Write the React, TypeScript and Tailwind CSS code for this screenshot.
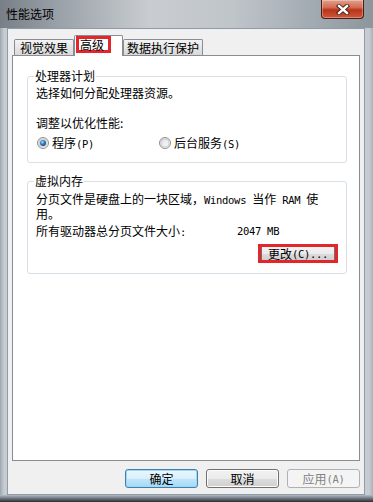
import React from 'react';

function Latin({ children }: { children: React.ReactNode }) {
  return (
    <span className="font-['DejaVu_Sans_Mono',monospace] text-[10.5px] tracking-[-0.3px]">
      {children}
    </span>
  );
}

function Radio({ id, checked }: { id: string; checked?: boolean }) {
  return (
    <svg width="12" height="12" viewBox="0 0 12 12" className="shrink-0">
      <defs>
        <linearGradient id={`${id}-ring`} x1="0" y1="0" x2="1" y2="1">
          <stop offset="0" stopColor="#dcdcdc" />
          <stop offset="1" stopColor="#ffffff" />
        </linearGradient>
        <radialGradient id={`${id}-dot`} cx="0.4" cy="0.35" r="0.7">
          <stop offset="0" stopColor="#b8e0f8" />
          <stop offset="0.45" stopColor="#3a86c8" />
          <stop offset="1" stopColor="#0e3f73" />
        </radialGradient>
      </defs>
      <circle cx="6" cy="6" r="5.5" fill={`url(#${id}-ring)`} stroke="#8e8f8f" />
      <circle cx="6" cy="6" r="4" fill="none" stroke="#c8c8c8" strokeWidth="0.8" />
      {checked && <circle cx="6" cy="6" r="3" fill={`url(#${id}-dot)`} />}
    </svg>
  );
}

function TitleBar() {
  return (
    <div className="h-[28px] flex items-start justify-between pl-[6px] pr-[9px] bg-[linear-gradient(90deg,#787f86_0%,#9aa1a8_16%,#c9cdd1_40%,#c0c5ca_62%,#a5adb4_82%,#8d959d_100%)]">
      <span className="mt-[7px] leading-[14px] text-[12px] text-black">性能选项</span>
      <button className="flex items-center justify-center w-[43px] h-[19px] rounded-b-[4px] border border-t-0 border-[#4a1d14] bg-[linear-gradient(180deg,#e2a08d_0%,#d26a50_42%,#b9341b_55%,#cf563a_100%)] shadow-[inset_0_0_0_1px_rgba(255,255,255,0.3)]">
        <svg width="14" height="11" viewBox="0 0 14 11">
          <path d="M3 2 L11 9 M11 2 L3 9" stroke="#3b1a12" strokeWidth="4.2" strokeLinecap="square" />
          <path d="M3 2 L11 9 M11 2 L3 9" stroke="#ffffff" strokeWidth="2.4" strokeLinecap="square" />
        </svg>
      </button>
    </div>
  );
}

function Tabs() {
  return (
    <div className="h-[26px] flex items-end pl-[6px]">
      <div className="w-[60px] h-[16px] flex items-center justify-center border border-b-0 border-[#898c95] rounded-t-[2px] bg-[linear-gradient(180deg,#f4f4f4,#e6e6e6_50%,#d9d9d9)] leading-[12px]">
        视觉效果
      </div>
      <div className="relative z-10 -mb-px w-[49px] h-[21px] flex items-start pl-[1px] border border-b-0 border-[#898c95] rounded-t-[2px] bg-white">
        <span className="h-[17px] box-border border-[3px] border-[#e3262b] pl-[1px] pr-[4px] leading-[11px]">
          高级
        </span>
      </div>
      <div className="w-[80px] h-[16px] flex items-center justify-center border border-b-0 border-[#898c95] rounded-t-[2px] bg-[linear-gradient(180deg,#f4f4f4,#e6e6e6_50%,#d9d9d9)] leading-[12px]">
        数据执行保护
      </div>
    </div>
  );
}

export default function App() {
  return (
    <div className="w-[373px] h-[502px] flex flex-col bg-[#bec5cc] font-['Noto_Sans_CJK_SC',sans-serif] text-[12px] text-black">
      <TitleBar />

      <div className="flex-1 flex min-h-0 pl-[7px] pr-[8px] bg-[linear-gradient(90deg,#9ea6ae,#c6ccd2_4px,#c6ccd2_calc(100%-4px),#a9b1ba)]">
        <div className="flex-1 flex flex-col bg-[#f0f0f0] border border-[#8f9ba7]">
          <Tabs />

          <div className="flex-1 mx-[4px] bg-white border border-[#898c95] flex flex-col">
            <fieldset className="mt-[14px] ml-[14px] mr-[12px] border border-[#d5dfe5] rounded-[3px] p-0">
              <legend className="ml-[6px] px-[1px] leading-[12px]">处理器计划</legend>
              <div className="pl-[8px] pr-[8px] pt-[3px] pb-[11px]">
                <div className="leading-[16px]">选择如何分配处理器资源。</div>
                <div className="mt-[14px] leading-[16px]">调整以优化性能:</div>
                <div className="mt-[4px] h-[16px] flex items-center leading-[16px]">
                  <div className="w-[123px] flex items-center pl-[1px]">
                    <Radio id="r1" checked />
                    <span className="ml-[3px]">
                      程序<Latin>(P)</Latin>
                    </span>
                  </div>
                  <div className="flex items-center">
                    <Radio id="r2" />
                    <span className="ml-[3px]">
                      后台服务<Latin>(S)</Latin>
                    </span>
                  </div>
                </div>
              </div>
            </fieldset>

            <fieldset className="mt-[12px] ml-[14px] mr-[12px] border border-[#d5dfe5] rounded-[3px] p-0">
              <legend className="ml-[6px] px-[1px] leading-[12px]">虚拟内存</legend>
              <div className="pl-[8px] pr-[8px] pt-[5px] pb-[10px]">
                <div className="leading-[14px]">
                  分页文件是硬盘上的一块区域，<Latin>Windows </Latin>当作<Latin> RAM </Latin>使
                  <br />
                  用。
                </div>
                <div className="mt-[2px] flex leading-[16px]">
                  <span className="w-[201px]">
                    所有驱动器总分页文件大小<Latin>:</Latin>
                  </span>
                  <Latin>2047 MB</Latin>
                </div>
                <div className="mt-[4px] flex justify-end">
                  <div className="w-[80px] h-[19px] box-border flex border-[3px] border-[#e3262b]">
                    <button className="flex-1 flex items-center justify-center border-x border-[#707070] bg-[linear-gradient(180deg,#f2f2f2,#ebebeb_50%,#dddddd_51%,#cfcfcf)] leading-[12px]">
                      更改<Latin>(C)...</Latin>
                    </button>
                  </div>
                </div>
              </div>
            </fieldset>
          </div>

          <div className="h-[19px] mt-[8px] mb-[6px] flex justify-end gap-[8px] pr-[4px]">
            <button className="w-[73px] h-[19px] flex items-center justify-center rounded-[3px] border border-[#3c7fb1] bg-[linear-gradient(180deg,#eaf6fd,#d9f0fc_50%,#bee6fd_51%,#a7d9f5)] shadow-[inset_0_0_0_1px_#a3d6f3] leading-[12px]">
              确定
            </button>
            <button className="w-[73px] h-[19px] flex items-center justify-center rounded-[3px] border border-[#707070] bg-[linear-gradient(180deg,#f2f2f2,#ebebeb_50%,#dddddd_51%,#cfcfcf)] shadow-[inset_0_0_0_1px_#fcfcfc] leading-[12px]">
              取消
            </button>
            <button className="w-[73px] h-[19px] flex items-center justify-center rounded-[3px] border border-[#adb2b5] bg-[#f4f4f4] text-[#838383] leading-[12px]">
              应用<Latin>(A)</Latin>
            </button>
          </div>
        </div>
      </div>

      <div className="h-[7px] bg-[linear-gradient(180deg,#b4bcc4,#6c747c_50%,#2a2e33)]" />
    </div>
  );
}
